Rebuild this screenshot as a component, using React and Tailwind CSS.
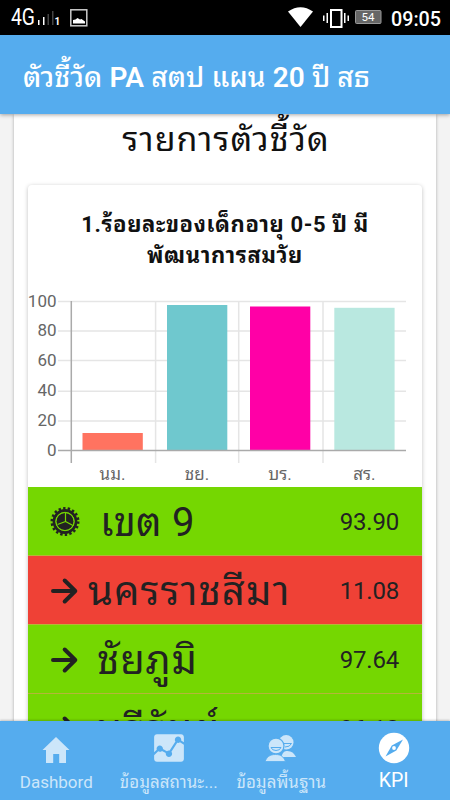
import React from 'react';
import { IoMdAnalytics } from 'react-icons/io';

const rows = [
  { name: 'เขต 9', value: '93.90', region: true, bg: 'bg-[#75d701]', label: 'ml-[20px] tracking-[0.2px]' },
  { name: 'นครราชสีมา', value: '11.08', bg: 'bg-[#ef4136]', label: 'ml-[8px] tracking-[1.1px]' },
  { name: 'ชัยภูมิ', value: '97.64', bg: 'bg-[#75d701]', label: 'ml-[17px] tracking-[0.9px]' },
  { name: 'บุรีรัมย์', value: '96.18', bg: 'bg-[#75d701]', label: 'ml-[16px] tracking-[2.4px]' },
];

const bars = [
  { name: 'นม.', x: 82.5, y: 433, fill: '#ff7360' },
  { name: 'ชย.', x: 167, y: 305, fill: '#6fc8ce' },
  { name: 'บร.', x: 250, y: 306.5, fill: '#ff00a6' },
  { name: 'สร.', x: 334.3, y: 307.8, fill: '#b9e8e0' },
];

const ticks = [
  { label: '100', y: 301.5 },
  { label: '80', y: 331 },
  { label: '60', y: 360.5 },
  { label: '40', y: 391.3 },
  { label: '20', y: 421 },
];

const StatusBar = () => (
  <div className="h-[35px] shrink-0 bg-black text-white flex items-center">
    <svg width="450" height="35" viewBox="0 0 450 35" fill="white">
      <text x="11" y="25" fontSize="24" textLength="24" lengthAdjust="spacingAndGlyphs">4G</text>
      <path d="M38 20h1.500v5H38zM43 17h1.500v8H43z" />
      <path d="M47.500 14H49v11h-1.500zM52 11h1.500v14H52z" fill="#444" />
      <text x="54.500" y="25" fontSize="10" fontWeight="700">1</text>
      <rect x="70.800" y="9.800" width="16" height="16" fill="none" stroke="#ccc" strokeWidth="1.500" />
      <path d="M73 23.500v-3.500l2.500-.5 2-1.500 2.500 1.500 1.500-.5 3.500 2.500v2z" />
      <path d="M288 11.500Q300.500 3 313 11.500L300.500 27z" />
      <rect x="331" y="10" width="10.500" height="17" fill="none" stroke="white" strokeWidth="2" />
      <path d="M326.500 13H328v10h-1.500zM323 15.500h1.500v5.500H323zM344 13h1.500v10H344zM347.500 15.500h1.500v5.500h-1.500z" />
      <rect x="355.500" y="10.500" width="25.500" height="13" rx="1" fill="#666" stroke="#999" />
      <text x="368" y="21" fontSize="11.500" textAnchor="middle">54</text>
      <text x="391" y="25.500" fontSize="20" fontWeight="500" textLength="50" lengthAdjust="spacingAndGlyphs">09:05</text>
    </svg>
  </div>
);

const Chart = () => (
  <svg className="block" width="394" height="203" viewBox="28 284 394 203" fontSize="17" fill="#666">
    {ticks.map((t) => (
      <path key={t.label} d={`M58 ${t.y}H406`} stroke="#e5e5e5" strokeWidth="1.500" />
    ))}
    <path d="M155.600 301V463M238.700 301V463M323 301V463" stroke="#e5e5e5" strokeWidth="1.500" />
    {bars.map((b) => (
      <rect key={b.name} x={b.x} y={b.y} width="60.300" height={450 - b.y} fill={b.fill} />
    ))}
    <path d="M58 450.500H406M71.300 301V463" stroke="#aaa" strokeWidth="1.500" />
    {ticks.concat({ label: '0', y: 450.5 }).map((t) => (
      <text key={t.label} x="56.500" y={t.y + 5} textAnchor="end">{t.label}</text>
    ))}
    {bars.map((b) => (
      <text key={b.name} x={b.x + 30} y="480" textAnchor="middle">{b.name}</text>
    ))}
  </svg>
);

const Cog = () => (
  <svg className="shrink-0" width="30" height="30" viewBox="0 0 30 30" fill="none" stroke="#222">
    <circle cx="15" cy="15.500" r="13.200" strokeWidth="2.600" strokeDasharray="2.400 2.207" />
    <circle cx="15" cy="15.500" r="11" strokeWidth="2.800" />
    <circle cx="15" cy="15.500" r="8.600" fill="#222" stroke="none" />
    <path d="M15.500 15.500V7M15.500 15.500l7.500 4M15.500 15.500l-8 3" stroke="#75d701" strokeWidth="1.200" />
    <circle cx="15" cy="15.500" r="9.200" stroke="#75d701" strokeWidth="0.900" />
  </svg>
);

const Arrow = () => (
  <svg className="shrink-0" width="30" height="30" viewBox="0 0 30 30" fill="none" stroke="#222" strokeWidth="4" strokeLinecap="round" strokeLinejoin="round">
    <path d="M3 16H25M14.700 5.500L25.300 16L14.700 26.500" />
  </svg>
);

const Home = () => (
  <svg className="mt-1" width="28" height="28" viewBox="0 0 28 28" fill="currentColor">
    <path d="M14 1L27.500 14H24v13h-6.800v-9h-6v9H4V14H.5z" />
  </svg>
);

const Contacts = () => (
  <svg width="32" height="30" viewBox="0 0 32 30" fill="currentColor">
    <circle cx="21.200" cy="9.300" r="7.300" />
    <path d="M16.500 24c1-5 3-6 6-6 4 0 6.500 2 8.500 6z" />
    <path d="M16 10.500h10.500q-1.500 3.500-6.500 3.500" fill="none" stroke="#55acee" />
    <circle cx="11" cy="13" r="8" stroke="#55acee" strokeWidth="1.300" />
    <path d="M0 28.500c2-4.500 4.500-7 10.500-7s8 2.500 10 7z" stroke="#55acee" strokeWidth="0.800" />
    <path d="M6 14.500h10q-1 3-5 3t-5-3z" fill="none" stroke="#55acee" />
  </svg>
);

const Compass = () => (
  <svg width="32" height="32" viewBox="0 0 32 32">
    <circle cx="16" cy="16" r="15.200" fill="currentColor" />
    <path d="M25 7.500L18.300 18.600L7.500 24.500L13.800 13.600z" fill="#55acee" />
    <circle cx="16" cy="16" r="1.900" fill="currentColor" />
  </svg>
);

const Tab = ({ icon, label, active }) => (
  <div className={`w-1/4 h-full flex flex-col items-center pt-[9px] text-[17px] leading-6 whitespace-nowrap ${active ? 'text-white' : 'text-[#cce6fa]'}`}>
    <div className="h-9 flex items-center">{icon}</div>
    <span className={active ? 'text-[19.5px] mt-[3px]' : 'mt-1'}>{label}</span>
  </div>
);

export default function App() {
  return (
    <div className="w-[450px] h-[800px] flex flex-col overflow-hidden bg-[#f3f3f3] font-['Roboto','Droid_Sans_Thai','Noto_Sans_Thai_Looped','Noto_Looped_Thai','Loma','Waree','Garuda','Noto_Sans_Thai',sans-serif]">
      <StatusBar />
      <header className="relative z-10 h-[79px] shrink-0 bg-[#55acee] text-white flex items-center pl-[23px] pt-[7px] text-[28px] font-medium tracking-[0.1px] shadow-[0_1px_4px_rgba(0,0,0,0.35)]">
        <h1 className="whitespace-nowrap">
          ตัวชี้วัด <span className="font-semibold">PA</span> สตป แผน <span className="font-semibold">20</span> ปี สธ
        </h1>
      </header>

      <main className="flex-1 min-h-0 overflow-hidden px-3.5">
        <div className="h-[700px] bg-white px-3.5 shadow-[0_1px_3px_rgba(0,0,0,0.3)]">
          <h2 className="h-[71px] pt-[3px] pl-0.5 text-center text-[34px] leading-[44px] tracking-[1px] text-[#111]">รายการตัวชี้วัด</h2>
          <section className="rounded-sm bg-white shadow-[0_1px_4px_rgba(0,0,0,0.25)]">
            <h3 className="h-[99px] pt-6 text-center text-[22px] leading-[31px] font-bold tracking-[0.6px] text-[#111]">
              1.ร้อยละของเด็กอายุ 0-5 ปี มี<br />พัฒนาการสมวัย
            </h3>
            <Chart />
            {rows.map((r) => (
              <div key={r.name} className={`h-[69px] pl-[22px] pr-[23px] flex items-center border-b border-[#b5b53a] text-[#222] ${r.bg}`}>
                {r.region ? <Cog /> : <Arrow />}
                <span className={`${r.label} flex-1 whitespace-nowrap pt-1 text-[40px] leading-[60px]`}>{r.name}</span>
                <span className="pt-px text-2xl tracking-[-0.2px]">{r.value}</span>
              </div>
            ))}
          </section>
        </div>
      </main>

      <nav className="relative z-10 h-[79px] shrink-0 flex bg-[#55acee] shadow-[0_-1px_2px_rgba(0,0,0,0.2)]">
        <Tab icon={<Home />} label="Dashbord" />
        <Tab icon={<IoMdAnalytics size={34} />} label="ข้อมูลสถานะ..." />
        <Tab icon={<Contacts />} label="ข้อมูลพื้นฐาน" />
        <Tab icon={<Compass />} label="KPI" active />
      </nav>
    </div>
  );
}
